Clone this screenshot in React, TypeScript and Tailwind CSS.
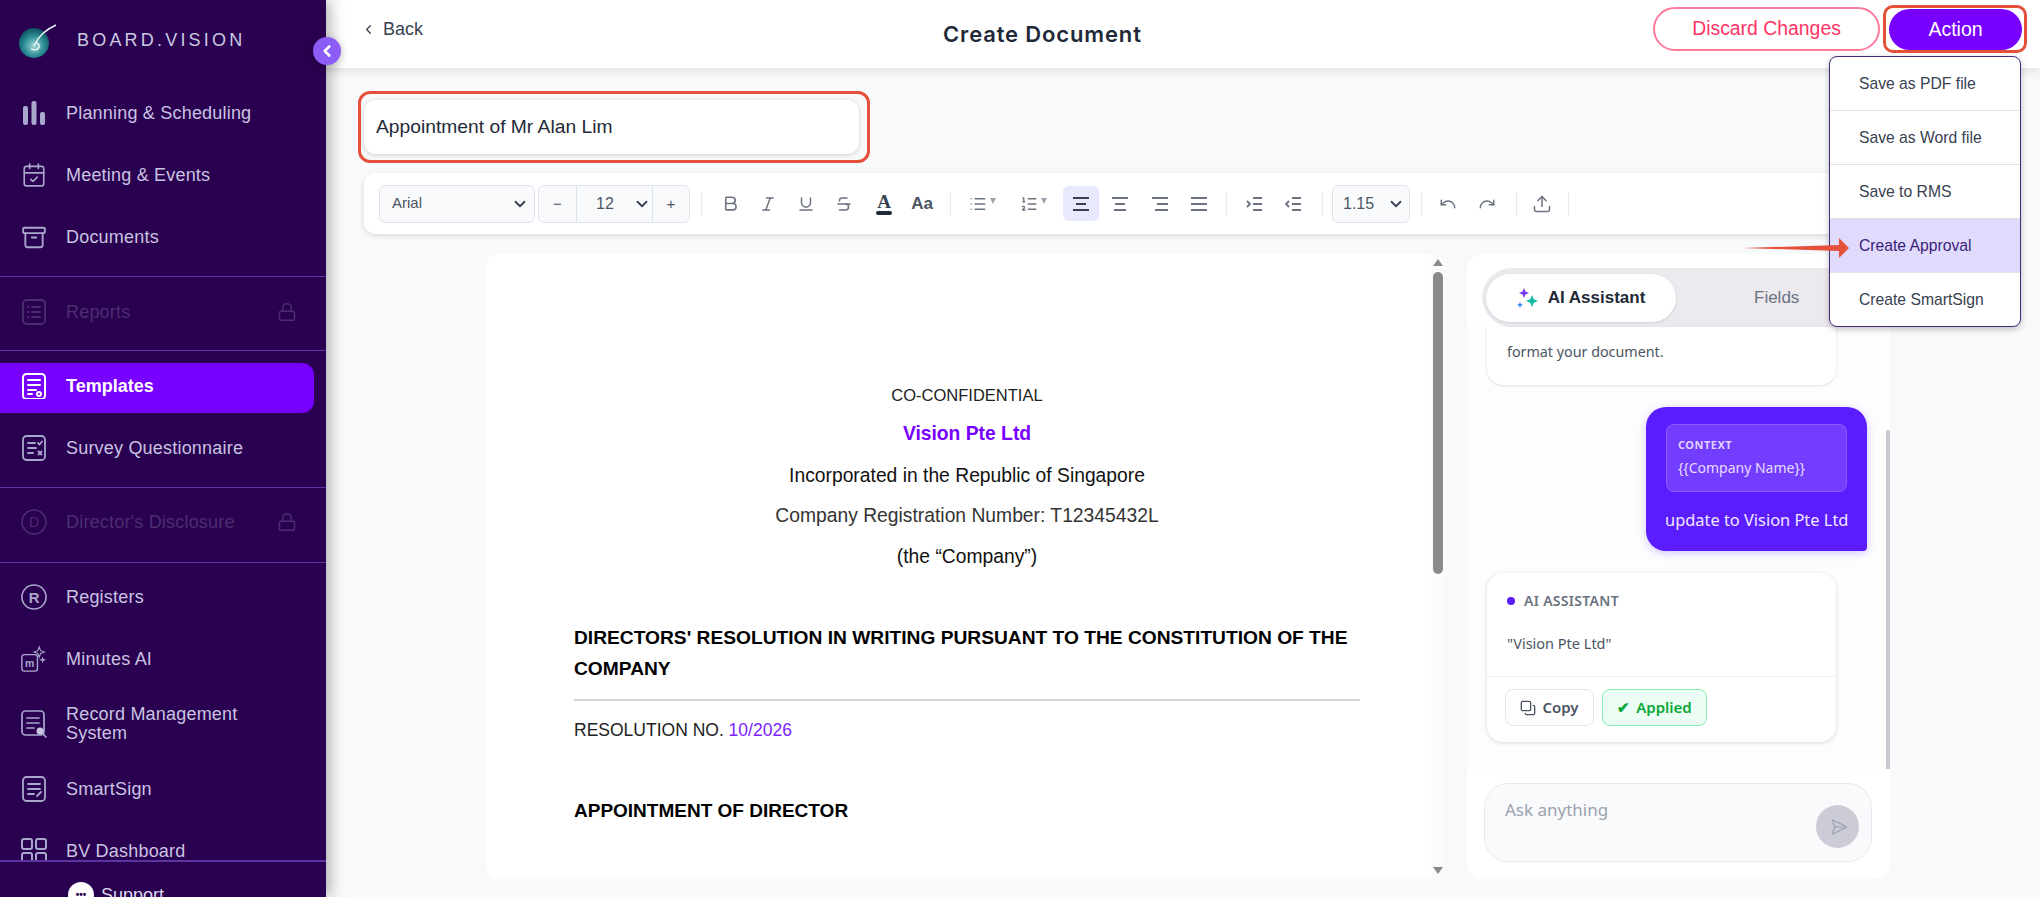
import React from 'react';
import {
  Bold, Italic, Underline, Strikethrough, List, ListOrdered, Undo, Redo, Upload,
  ChevronDown, ChevronLeft, Lock, CalendarCheck, Archive, Copy, Send,
} from 'lucide-react';

const ic = 'w-[26px] h-[26px]';

function BarsIcon() {
  return (
    <svg viewBox="0 0 26 26" className={ic} fill="#a9a8cc">
      <rect x="2" y="6" width="5" height="19" rx="2" />
      <rect x="10.5" y="1" width="5" height="24" rx="2" />
      <rect x="19" y="12" width="5" height="13" rx="2" />
    </svg>
  );
}

function DocLines({ children, color = '#a9a8cc' }: { children?: React.ReactNode; color?: string }) {
  return (
    <svg viewBox="0 0 26 26" className={ic} fill="none" stroke={color} strokeWidth="1.8" strokeLinecap="round">
      <rect x="2" y="1" width="22" height="24" rx="3.5" />
      {children}
    </svg>
  );
}

function MinutesIcon() {
  return (
    <svg viewBox="0 0 30 30" className="w-[30px] h-[30px]" fill="none" stroke="#a9a8cc" strokeWidth="1.6">
      <rect x="1" y="10" width="18" height="19" rx="3" />
      <text x="10" y="24" fontSize="12" fontWeight="700" textAnchor="middle" fill="#a9a8cc" stroke="none" fontFamily="Liberation Sans, sans-serif">m</text>
      <path d="M21 1l1.6 4.4L27 7l-4.4 1.6L21 13l-1.6-4.4L15 7l4.4-1.6z" strokeWidth="1.2" />
      <path d="M25 12l1 3 3 1-3 1-1 3-1-3-3-1 3-1z" fill="#a9a8cc" stroke="none" />
    </svg>
  );
}

function NavRow({ label, icon, h = 'h-[62px]', muted, lock, two }: { label: React.ReactNode; icon: React.ReactNode; h?: string; muted?: boolean; lock?: boolean; two?: boolean }) {
  return (
    <div className={`flex items-center shrink-0 pl-[21px] pr-[29px] ${h}`}>
      <div className="w-[26px] flex justify-center shrink-0">{icon}</div>
      <span className={`ml-[19px] flex-1 text-[18px] tracking-[0.2px] ${two ? 'leading-[19.5px]' : ''} ${muted ? 'text-[#4a2e70]' : 'text-[#c9c4e2]'}`}>{label}</span>
      {lock && <Lock size={20} strokeWidth={1.8} className="text-[#4a2e70]" />}
    </div>
  );
}

function Divider() {
  return <div className="h-px bg-[#5a34a0] shrink-0" />;
}

function Sidebar() {
  return (
    <aside className="relative z-20 w-[326px] shrink-0 h-full bg-[#2a0050] flex flex-col shadow-[4px_0_14px_rgba(0,0,0,0.3)] font-['Liberation_Sans',sans-serif]">
      <div className="h-[82px] shrink-0 flex items-start pl-[19px] pt-[24px]">
        <svg viewBox="0 0 38 34" className="w-[38px] h-[34px]">
          <defs>
            <radialGradient id="globe" cx="0.5" cy="0.6" r="0.6">
              <stop offset="0" stopColor="#9fd8d4" />
              <stop offset="0.55" stopColor="#2f8f96" />
              <stop offset="1" stopColor="#0c4f5e" />
            </radialGradient>
          </defs>
          <circle cx="15" cy="19" r="15" fill="url(#globe)" />
          <path d="M12 25c5 2 9 0 8-4-1-3-5-2-5 1M16 20C20 12 28 5 37 1" fill="none" stroke="#e6f2f2" strokeWidth="1.5" />
        </svg>
        <span className="ml-[20px] mt-[3px] text-[18px] tracking-[3.2px] text-[#c9cbe2]">BOARD.VISION</span>
      </div>
      <nav className="flex-1 min-h-0 overflow-hidden flex flex-col">
        <NavRow label="Planning & Scheduling" icon={<BarsIcon />} />
        <NavRow label="Meeting & Events" icon={<CalendarCheck size={28} strokeWidth={1.5} className="text-[#a9a8cc]" />} />
        <NavRow label="Documents" icon={<Archive size={27} strokeWidth={1.7} className="text-[#a9a8cc]" />} />
        <div className="mt-[8px]"><Divider /></div>
        <div className="mt-[4px]">
          <NavRow
            label="Reports"
            muted
            lock
            icon={
              <DocLines color="#4a2e70">
                <path d="M7 8h.5M11 8h8M7 13h.5M11 13h8M7 18h.5M11 18h8" />
              </DocLines>
            }
          />
        </div>
        <div className="mt-[7px]"><Divider /></div>
        <div className="mt-[12px] h-[50px] w-[314px] shrink-0 rounded-r-[12px] bg-[#7700ff] flex items-center pl-[21px] pb-[4px]">
          <svg viewBox="0 0 26 26" className={ic} fill="none" stroke="#ffffff" strokeWidth="2" strokeLinecap="round">
            <rect x="2" y="1" width="22" height="25" rx="3.5" />
            <path d="M7 7h12M7 12h12M7 17h8M7 21h4" />
            <circle cx="18" cy="21" r="2" />
          </svg>
          <span className="ml-[19px] text-[18px] font-bold text-white">Templates</span>
        </div>
        <div className="mt-[4px]">
          <NavRow
            label="Survey Questionnaire"
            icon={
              <DocLines>
                <path d="M7 8h7M7 13h8M7 18h5M17 8l1.500 1.500L21 6.500M17.500 16.500l3 3M20.500 16.500l-3 3" />
              </DocLines>
            }
          />
        </div>
        <div className="mt-[8px]"><Divider /></div>
        <div className="mt-[3px]">
          <NavRow
            label="Director's Disclosure"
            muted
            lock
            icon={
              <svg viewBox="0 0 26 26" className={ic} fill="none" stroke="#4a2e70" strokeWidth="1.6">
                <circle cx="13" cy="13" r="12" />
                <text x="13" y="18" fontSize="14" textAnchor="middle" fill="#4a2e70" stroke="none" fontFamily="Liberation Sans, sans-serif">D</text>
              </svg>
            }
          />
        </div>
        <div className="mt-[9px]"><Divider /></div>
        <div className="mt-[3px]">
          <NavRow
            label="Registers"
            icon={
              <svg viewBox="0 0 28 28" className="w-[28px] h-[28px]" fill="none" stroke="#a9a8cc" strokeWidth="1.7">
                <circle cx="14" cy="14" r="13" />
                <text x="14" y="20" fontSize="16" fontWeight="700" textAnchor="middle" fill="#a9a8cc" stroke="none" fontFamily="Liberation Sans, sans-serif">R</text>
              </svg>
            }
          />
        </div>
        <NavRow label="Minutes AI" icon={<MinutesIcon />} />
        <NavRow
          label={<>Record Management<br />System</>}
          two
          h="h-[68px]"
          icon={
            <svg viewBox="0 0 26 28" className="w-[26px] h-[28px]" fill="none" stroke="#a9a8cc" strokeWidth="1.7" strokeLinecap="round">
              <rect x="1" y="1" width="22" height="24" rx="3.500" />
              <path d="M6 8h12M6 13h12M6 18h7" />
              <circle cx="19" cy="21" r="3.500" fill="#c9c4e2" stroke="none" />
              <path d="M22 24l3 3" />
            </svg>
          }
        />
        <NavRow
          label="SmartSign"
          icon={
            <DocLines>
              <path d="M7 8h12M7 13h12M7 18h6M16 20l4-4" />
            </DocLines>
          }
        />
        <NavRow
          label="BV Dashboard"
          icon={
            <svg viewBox="0 0 26 26" className={ic} fill="none" stroke="#a9a8cc" strokeWidth="2">
              <rect x="1" y="1" width="10" height="10" rx="2" />
              <rect x="15" y="1" width="10" height="10" rx="2" />
              <rect x="1" y="15" width="10" height="10" rx="2" />
              <rect x="15" y="15" width="10" height="10" rx="2" />
            </svg>
          }
        />
      </nav>
      <div className="h-[37px] shrink-0 border-t-2 border-[#5a34a0] overflow-hidden flex items-start pl-[68px] pt-[20px]">
        <div className="w-[26px] h-[26px] shrink-0 rounded-full bg-white flex items-center justify-center text-[#2a0050] text-[10px] font-bold leading-none">•••</div>
        <span className="ml-[7px] text-[18px] text-[#dcd8ee]">Support</span>
      </div>
      <button className="absolute left-[313px] top-[37px] w-[28px] h-[28px] rounded-full bg-[#8b5cf6] flex items-center justify-center shadow-[0_2px_8px_rgba(0,0,0,0.25)]">
        <ChevronLeft size={18} strokeWidth={3.5} className="text-white" />
      </button>
    </aside>
  );
}

function ToolBtn({ children, active, w = 'w-[36px]' }: { children: React.ReactNode; active?: boolean; w?: string }) {
  return (
    <div className={`h-[35px] ${w} flex items-center justify-center shrink-0 text-[#6b7280]`}>
      {active ? <div className="w-[36px] h-[35px] rounded-[6px] bg-[#e8e9fd] flex items-center justify-center">{children}</div> : children}
    </div>
  );
}

function Sep({ m = 'mx-[8px]' }: { m?: string }) {
  return <div className={`w-px h-[24px] bg-[#e8eaf0] shrink-0 ${m}`} />;
}

function AlignIcon({ lines, dark }: { lines: string; dark?: boolean }) {
  return (
    <svg viewBox="0 0 18 18" className="w-[18px] h-[18px]" fill="none" stroke={dark ? '#374151' : '#6b7280'} strokeWidth="1.8">
      <path d={lines} />
    </svg>
  );
}

function Caret() {
  return <span className="w-0 h-0 ml-[3px] mb-[5px] border-x-[3.5px] border-t-[6px] border-x-transparent border-t-[#9ca3af]" />;
}

function Toolbar() {
  const box = 'h-[38px] rounded-[6px] border border-[#dfe3ee] bg-[#f9fafc] flex items-center text-[#4b5563] text-[15px] shrink-0';
  return (
    <div className="ml-[38px] mt-[10px] w-[1527px] h-[61px] shrink-0 bg-white rounded-[12px] shadow-[0_2px_6px_rgba(0,0,0,0.12)] flex items-center pl-[15px]">
      <div className={`${box} w-[156px] pl-[12px] pr-[5px] justify-between`}>
        <span>Arial</span>
        <ChevronDown size={18} strokeWidth={2.4} className="text-[#374151]" />
      </div>
      <div className={`${box} w-[152px] ml-[3px]`}>
        <span className="w-[38px] text-center border-r border-[#dfe3ee] leading-[36px]">−</span>
        <div className="flex-1 flex items-center pl-[19px] gap-[19px]">
          <span className="text-[16px]">12</span>
          <ChevronDown size={18} strokeWidth={2.4} className="text-[#374151]" />
        </div>
        <span className="w-[37px] text-center border-l border-[#dfe3ee] leading-[36px]">+</span>
      </div>
      <Sep m="ml-[11px] mr-[10px]" />
      <ToolBtn><Bold size={19} strokeWidth={2} /></ToolBtn>
      <ToolBtn w="w-[40px]"><Italic size={18} strokeWidth={2} /></ToolBtn>
      <ToolBtn><Underline size={18} strokeWidth={2} /></ToolBtn>
      <ToolBtn w="w-[40px]"><Strikethrough size={18} strokeWidth={2} /></ToolBtn>
      <div className="w-[40px] flex flex-col items-center shrink-0">
        <span className="font-['Liberation_Serif',serif] text-[19px] leading-[19px] font-bold text-[#374151]">A</span>
        <span className="w-[16px] h-[4px] rounded-full bg-[#1f2937]" />
      </div>
      <span className="w-[36px] text-center text-[17px] font-bold text-[#4b5563] shrink-0">Aa</span>
      <Sep m="ml-[10px] mr-[6px]" />
      <div className="w-[50px] flex items-center justify-center shrink-0 text-[#6b7280]"><List size={18} strokeWidth={1.8} /><Caret /></div>
      <div className="w-[52px] flex items-center justify-center shrink-0 text-[#6b7280]"><ListOrdered size={18} strokeWidth={1.8} /><Caret /></div>
      <div className="w-[4px] shrink-0" />
      <ToolBtn active><AlignIcon dark lines="M1 3h16M4 9h10M1 15h16" /></ToolBtn>
      <ToolBtn w="w-[41px]"><AlignIcon lines="M1 3h16M4 9h10M3 15h12" /></ToolBtn>
      <ToolBtn w="w-[39px]"><AlignIcon lines="M1 3h16M6 9h11M4 15h13" /></ToolBtn>
      <ToolBtn w="w-[39px]"><AlignIcon lines="M1 3h16M1 9h16M1 15h16" /></ToolBtn>
      <Sep m="mx-[8px]" />
      <ToolBtn w="w-[38px]"><AlignIcon lines="M8 3h9M8 9h9M8 15h9M2 6l3 3-3 3" /></ToolBtn>
      <ToolBtn w="w-[40px]"><AlignIcon lines="M8 3h9M8 9h9M8 15h9M5 6L2 9l3 3" /></ToolBtn>
      <Sep m="mx-[9px]" />
      <div className={`${box} w-[78px] pl-[10px] pr-[4px] justify-between`}>
        <span className="text-[16px]">1.15</span>
        <ChevronDown size={18} strokeWidth={2.4} className="text-[#374151]" />
      </div>
      <Sep m="ml-[11px] mr-[8px]" />
      <ToolBtn w="w-[36px]"><Undo size={18} strokeWidth={1.9} /></ToolBtn>
      <ToolBtn w="w-[42px]"><Redo size={18} strokeWidth={1.9} /></ToolBtn>
      <Sep m="mx-[8px]" />
      <ToolBtn w="w-[34px]"><Upload size={20} strokeWidth={1.8} /></ToolBtn>
      <Sep m="ml-[9px]" />
    </div>
  );
}

function DocPanel() {
  const para = 'text-center leading-[24px] text-[19.3px]';
  return (
    <section className="w-[959px] shrink-0 bg-white rounded-[12px] flex overflow-hidden text-[#111] font-['Liberation_Sans',sans-serif]">
      <div className="flex-1 min-w-0 pl-[88px] pr-[71px] pt-[129px]">
        <p className="text-center leading-[24px] text-[16.5px] text-[#222]">CO-CONFIDENTIAL</p>
        <p className="text-center leading-[24px] mt-[15px] font-bold text-[#7700ff] text-[19.3px]">Vision Pte Ltd</p>
        <p className={`${para} mt-[18px]`}>Incorporated in the Republic of Singapore</p>
        <p className={`${para} mt-[16px] text-[#333]`}>Company Registration Number: T12345432L</p>
        <p className={`${para} mt-[17px]`}>(the “Company”)</p>
        <h2 className="mt-[53px] text-[19.2px] font-bold leading-[31px] text-black">DIRECTORS' RESOLUTION IN WRITING PURSUANT TO THE CONSTITUTION OF THE COMPANY</h2>
        <div className="mt-[15px] h-[2px] bg-[#d4d4d8]" />
        <p className="mt-[17px] text-[17.5px] leading-[24px] text-[#222]">RESOLUTION NO. <span className="text-[#7c22ff]">10/2026</span></p>
        <h3 className="mt-[57px] text-[19px] font-bold leading-[24px] text-black">APPOINTMENT OF DIRECTOR</h3>
      </div>
      <div className="w-[14px] shrink-0 bg-[#fbfbfd] flex flex-col items-center pt-[5px] pb-[5px]">
        <span className="w-0 h-0 border-x-[5px] border-b-[7px] border-x-transparent border-b-[#8a8a8a]" />
        <div className="mt-[6px] w-[10px] h-[302px] rounded-full bg-[#8a8a8a]" />
        <span className="mt-auto w-0 h-0 border-x-[5px] border-t-[7px] border-x-transparent border-t-[#8a8a8a]" />
      </div>
    </section>
  );
}

function ChatPanel() {
  return (
    <section className="flex-1 min-w-0 bg-white rounded-[16px] flex flex-col overflow-hidden font-['Noto_Sans',sans-serif]">
      <div className="mx-[15px] mt-[14px] h-[59px] shrink-0 rounded-full bg-[#ece9ef] flex items-center pl-[4px] font-['Liberation_Sans',sans-serif]">
        <div className="w-[190px] h-[48px] rounded-full bg-white shadow-[0_1px_3px_rgba(0,0,0,0.12)] flex items-center justify-center gap-[9px] text-[17px] font-bold text-[#1f2937]">
          <svg viewBox="0 0 22 22" className="w-[22px] h-[22px]">
            <path d="M7 1l1.500 3.500L12 6 8.500 7.500 7 11 5.500 7.500 2 6l3.500-1.500z" fill="#7c3aed" />
            <path d="M15 8l1.800 4.200L21 14l-4.200 1.800L15 20l-1.800-4.200L9 14l4.200-1.800z" fill="#14b8a6" />
            <path d="M3 15l.9 2.100L6 18l-2.100.9L3 21l-.9-2.100L0 18l2.100-.9z" fill="#3b82f6" />
          </svg>
          AI Assistant
        </div>
        <span className="ml-[78px] text-[17px] text-[#6b7280]">Fields</span>
      </div>
      <div className="flex-1 min-h-0 relative bg-[#fdfdfe] pl-[20px] pr-[23px]">
        <div className="absolute right-0 top-[103px] bottom-0 w-[4px] bg-[#c8c8d0] rounded-t-full" />
        <div className="bg-white w-[349px] h-[58px] rounded-b-[16px] shadow-[0_1px_3px_rgba(0,0,0,0.12)] pl-[20px] pt-[13px] text-[14.3px] leading-[24px] text-[#4b5563]">format your document.</div>
        <div className="ml-auto mt-[22px] w-[221px] h-[144px] rounded-[20px] rounded-br-[4px] bg-[#5b1cff] px-[20px] pt-[17px] shadow-[0_2px_8px_rgba(91,28,255,0.25)]">
          <div className="h-[68px] rounded-[8px] bg-white/15 border border-white/15 pl-[11px] pt-[12px]">
            <div className="text-[11px] leading-[16px] font-bold tracking-[0.5px] text-[#ded0ff]">CONTEXT</div>
            <div className="mt-[5px] text-[14px] leading-[20px] text-[#e6dcff]">{'{{Company Name}}'}</div>
          </div>
          <div className="mt-[16px] text-[16.4px] leading-[24px] text-[#efe9ff] whitespace-nowrap -ml-[1px]">update to Vision Pte Ltd</div>
        </div>
        <div className="mt-[22px] w-[349px] h-[169px] rounded-[16px] bg-white shadow-[0_1px_4px_rgba(0,0,0,0.15)] flex flex-col">
          <div className="flex items-center pl-[20px] pt-[19px]">
            <span className="w-[8px] h-[8px] rounded-full bg-[#5b1cff]" />
            <span className="ml-[9px] text-[14px] leading-[18px] font-semibold tracking-[0.3px] text-[#6b7280]">AI ASSISTANT</span>
          </div>
          <div className="pl-[20px] mt-[21px] text-[14.5px] leading-[24px] text-[#4b5563]">"Vision Pte Ltd"</div>
          <div className="mt-[21px] h-px bg-[#eeeff2]" />
          <div className="flex gap-[8px] pl-[18px] pt-[12px]">
            <div className="w-[89px] h-[37px] rounded-[8px] border border-[#e5e7eb] flex items-center justify-center gap-[6px] text-[15px] font-semibold text-[#4b5563]">
              <Copy size={16} strokeWidth={2} className="-scale-x-100 -scale-y-100" />
              Copy
            </div>
            <div className="w-[105px] h-[37px] rounded-[8px] border border-[#86efac] bg-[#ecfdf3] flex items-center justify-center gap-[6px] text-[15px] font-semibold text-[#0aa83a]">
              <span className="text-[15px]">✔</span>
              Applied
            </div>
          </div>
        </div>
      </div>
      <div className="h-[110px] shrink-0 bg-white px-[17px] pt-[14px]">
        <div className="h-[79px] w-[388px] rounded-[24px] border border-[#e8e9ee] bg-[#f9fafc] relative pl-[20px] pt-[14px] text-[17px] leading-[24px] text-[#9ca3af]">
          Ask anything
          <span className="absolute right-[12px] bottom-[13px] w-[43px] h-[43px] rounded-full bg-[#cbccd6] flex items-center justify-center">
            <Send size={18} strokeWidth={1.6} className="text-[#9fa1b3] rotate-45 -translate-x-[2px]" />
          </span>
        </div>
      </div>
    </section>
  );
}

function ActionMenu() {
  const items = ['Save as PDF file', 'Save as Word file', 'Save to RMS', 'Create Approval', 'Create SmartSign'];
  return (
    <div className="absolute right-[3px] top-[48px] w-[192px] bg-white border border-[#4a2a7a] rounded-[8px] shadow-[0_2px_6px_rgba(0,0,0,0.25)] font-['Liberation_Sans',sans-serif]">
      <div className="rounded-[8px] overflow-hidden">
        {items.map((item, i) => (
          <div
            key={item}
            className={`flex items-center pl-[29px] text-[15.7px] ${i < 4 ? 'h-[54px] border-b border-[#e2e2e6]' : 'h-[53px]'} ${item === 'Create Approval' ? 'bg-[#e0dafc] text-[#3b1d78]' : 'text-[#374151]'}`}
          >
            {item}
          </div>
        ))}
      </div>
      <svg viewBox="0 0 106 20" className="absolute left-[-87px] top-[181px] w-[106px] h-[20px]" fill="#e5503a">
        <polygon points="0,10 96,7 96,0 106,10 96,20 96,13" />
      </svg>
    </div>
  );
}

export default function App() {
  return (
    <div className="w-[2040px] h-[897px] overflow-hidden flex bg-[#f8f9fb]">
      <Sidebar />
      <main className="flex-1 min-w-0 flex flex-col h-full">
        <header className="relative z-10 h-[68px] shrink-0 bg-white shadow-[0_3px_10px_rgba(0,0,0,0.1)] flex items-center font-['Liberation_Sans',sans-serif]">
          <div className="w-[617px] shrink-0 pl-[35px] flex items-center self-start pt-[18px] text-[18px] leading-[22px] text-[#374151]">
            <ChevronLeft size={15} strokeWidth={2} className="mr-[7px] text-[#374151]" />
            Back
          </div>
          <h1 className="font-['Inter',sans-serif] text-[22px] tracking-[0.85px] font-semibold text-[#1f2937]">Create Document</h1>
          <div className="ml-auto mr-[13px] flex items-center gap-[3px] self-start pt-[5px]">
            <button className="w-[227px] h-[44px] rounded-full border-2 border-[#ff7a9a] text-[19.4px] text-[#ff3366]">Discard Changes</button>
            <div className="relative border-[3px] border-[#e5503a] rounded-[10px] pl-[3px] pr-[2px] pt-[1px]">
              <button className="block w-[133px] h-[41px] rounded-full bg-[#7700ff] text-[19.5px] text-white">Action</button>
              <ActionMenu />
            </div>
          </div>
        </header>
        <div className="ml-[32px] mt-[23px] w-[512px] h-[72px] shrink-0 border-[3px] border-[#e5503a] rounded-[12px] pl-[3px] pr-[8px] pt-[6px]">
          <div className="h-[54px] rounded-[12px] bg-white shadow-[0_1px_5px_rgba(0,0,0,0.18)] flex items-center pl-[12px] text-[19.25px] text-[#1f2937] font-['Liberation_Sans',sans-serif]">
            Appointment of Mr Alan Lim
          </div>
        </div>
        <div className="font-['Liberation_Sans',sans-serif]">
          <Toolbar />
        </div>
        <div className="ml-[160px] mr-[150px] mt-[20px] h-[625px] flex gap-[22px] shrink-0">
          <DocPanel />
          <ChatPanel />
        </div>
      </main>
    </div>
  );
}
